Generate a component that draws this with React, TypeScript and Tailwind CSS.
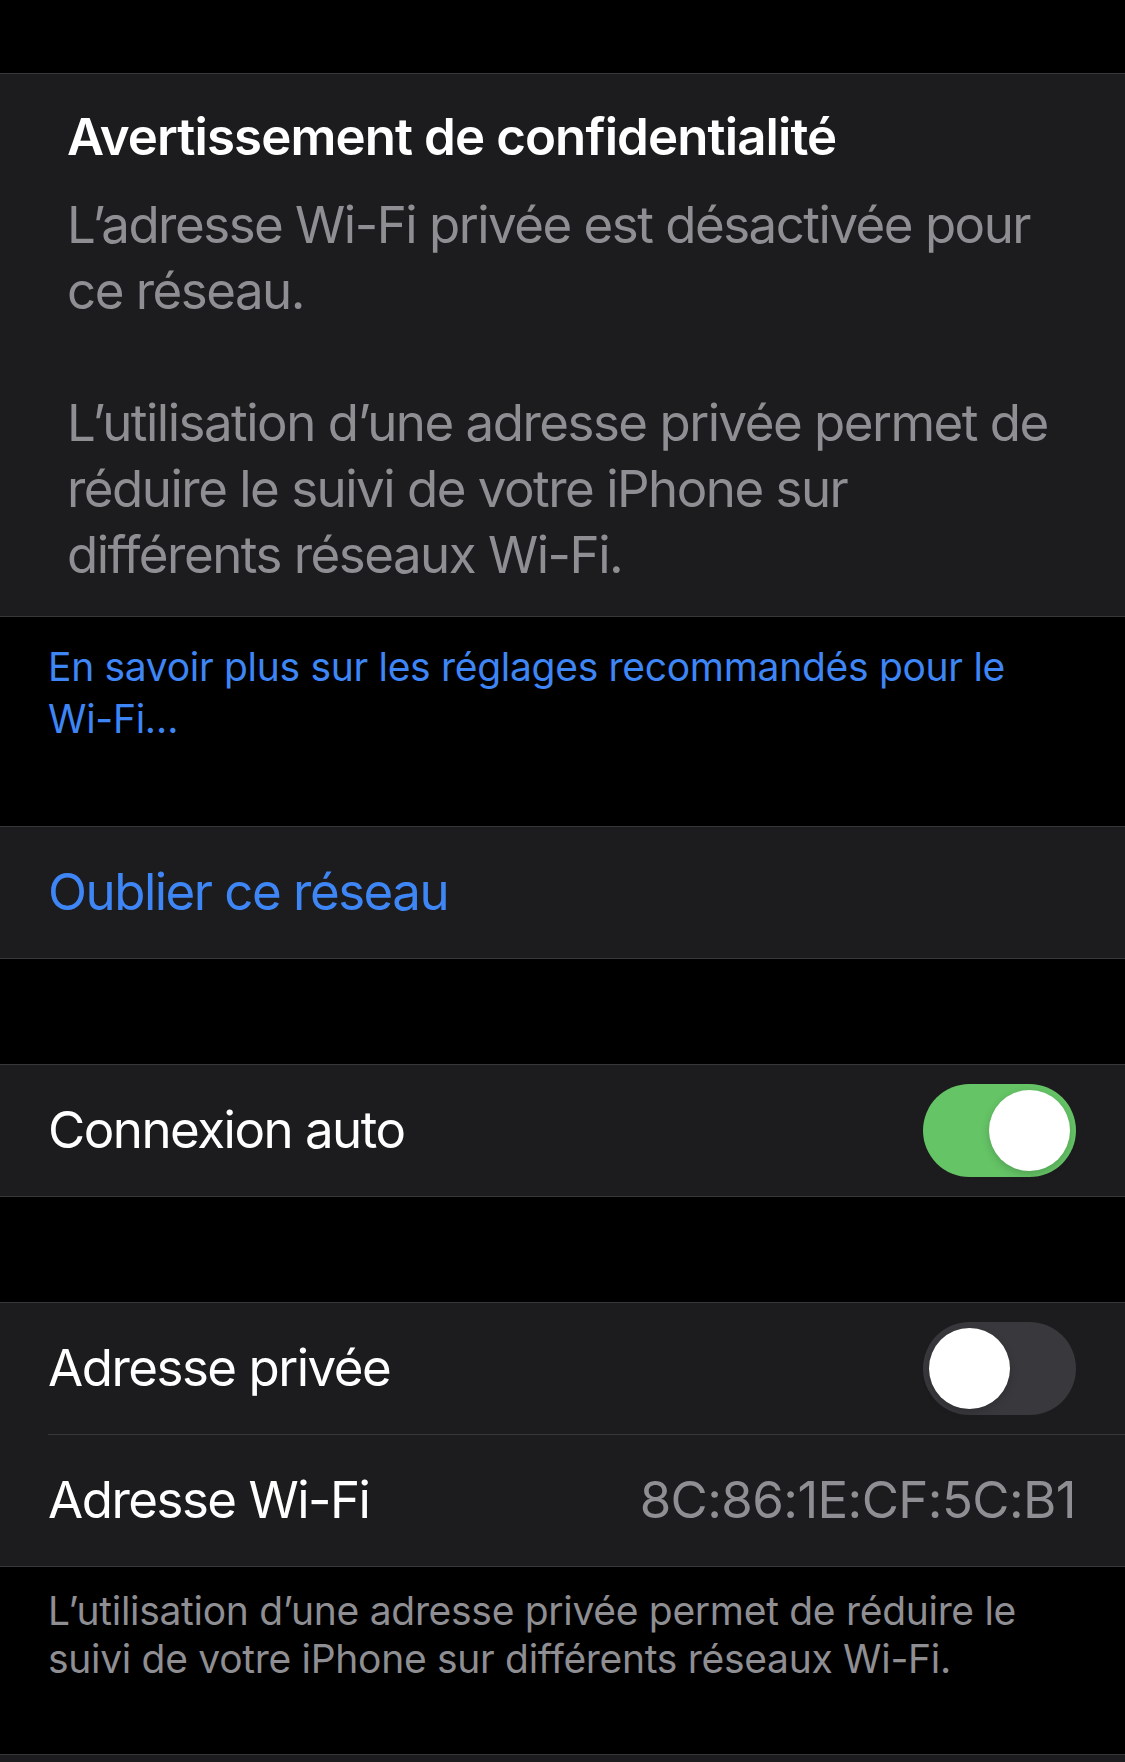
import React from "react";

const font = "font-['Inter','Noto_Sans',sans-serif]";

function Toggle({ on }: { on: boolean }) {
  return (
    <div
      className={`flex h-[93px] w-[153px] shrink-0 items-center rounded-full p-[6px] ${
        on ? "justify-end bg-[#65c466]" : "justify-start bg-[#39393d]"
      }`}
    >
      <div className="h-[81px] w-[81px] rounded-full bg-white shadow-[0_3px_9px_rgba(0,0,0,0.18)]" />
    </div>
  );
}

function Row({ children, className = "" }: { children: React.ReactNode; className?: string }) {
  return (
    <div className={`flex h-[131px] items-center justify-between pl-[48px] pr-[49px] ${className}`}>
      {children}
    </div>
  );
}

export default function App() {
  return (
    <div className={`min-h-[1762px] w-[1125px] bg-black ${font} antialiased`}>
      <div className="h-[73px]" />

      {/* privacy warning */}
      <section className="whitespace-nowrap border-y border-[#38383a] bg-[#1c1c1e] pl-[67px] pr-[40px] pt-[30px] pb-[28px]">
        <h2 className="text-[51px] font-semibold leading-[66px] tracking-[-0.9px] text-white">
          Avertissement de confidentialité
        </h2>
        <p className="mt-[22px] text-[51px] leading-[66px] tracking-[-1.5px] text-[#8e8e93]">
          L’adresse Wi-Fi privée est désactivée pour
          <br />
          ce réseau.
        </p>
        <p className="mt-[66px] text-[51px] leading-[66px] tracking-[-1.5px] text-[#8e8e93]">
          L’utilisation d’une adresse privée permet de
          <br />
          réduire le suivi de votre iPhone sur
          <br />
          différents réseaux Wi-Fi.
        </p>
      </section>

      <div className="whitespace-nowrap pl-[48px] pt-[24px] pb-[81px] text-[39px] leading-[52px] tracking-[-0.3px] text-[#3e86f5]">
        En savoir plus sur les réglages recommandés pour le
        <br />
        Wi-Fi…
      </div>

      <section className="border-y border-[#38383a] bg-[#1c1c1e]">
        <Row>
          <span className="text-[51px] tracking-[-1.5px] text-[#3e86f5]">Oublier ce réseau</span>
        </Row>
      </section>

      <div className="h-[105px]" />

      <section className="border-y border-[#38383a] bg-[#1c1c1e]">
        <Row>
          <span className="text-[51px] tracking-[-1.5px] text-white">Connexion auto</span>
          <Toggle on />
        </Row>
      </section>

      <div className="h-[105px]" />

      <section className="border-y border-[#38383a] bg-[#1c1c1e]">
        <Row>
          <span className="text-[51px] tracking-[-1.5px] text-white">Adresse privée</span>
          <Toggle on={false} />
        </Row>
        <div className="ml-[48px] h-px bg-[#38383a]" />
        <Row>
          <span className="text-[51px] tracking-[-1.5px] text-white">Adresse Wi-Fi</span>
          <span className="text-[51px] tracking-[-0.6px] text-[#8e8e93]">8C:86:1E:CF:5C:B1</span>
        </Row>
      </section>

      <div className="whitespace-nowrap border-b border-[#38383a] pl-[48px] pt-[20px] pb-[71px] text-[39px] leading-[48px] tracking-[-0.3px] text-[#8e8e93]">
        L’utilisation d’une adresse privée permet de réduire le
        <br />
        suivi de votre iPhone sur différents réseaux Wi-Fi.
      </div>
      <div className="h-[10px] bg-[#1c1c1e]" />
    </div>
  );
}
